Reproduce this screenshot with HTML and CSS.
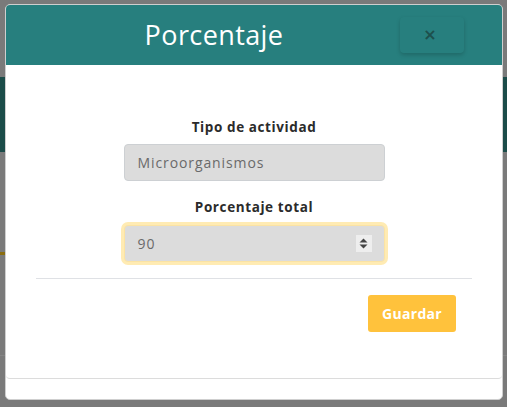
FILE: index.html
```html
<!DOCTYPE html>
<html lang="es">
<head>
<meta charset="utf-8">
<title>Porcentaje</title>
<link rel="stylesheet" href="styles.css">
</head>
<body>
<div class="page">
  <div class="band"></div>
  <div class="accent"></div>
  <div class="rule"></div>
</div>
<div class="modal">
  <div class="card">
    <div class="modal-header">
      <h2 class="title">Porcentaje</h2>
      <button class="close" type="button">&times;</button>
    </div>
    <div class="modal-body">
      <div class="group">
        <label class="label">Tipo de actividad</label>
        <div class="field">Microorganismos</div>
      </div>
      <div class="group">
        <label class="label">Porcentaje total</label>
        <div class="field focus"><span>90</span><span class="spin"><svg width="9" height="11" viewBox="0 0 9 11"><path d="M4.5 0.5 L8.5 4.5 H0.5 Z M4.5 10.5 L8.5 6.5 H0.5 Z" fill="#444"/></svg></span></div>
      </div>
    </div>
    <hr class="sep">
    <div class="modal-footer">
      <button class="save" type="button">Guardar</button>
    </div>
  </div>
</div>
</body>
</html>
```

FILE: styles.css
```css
html, body {
  margin: 0;
  padding: 0;
}
body {
  background: #7a7a7a;
  font-family: "Open Sans", "Liberation Sans", sans-serif;
  width: 507px;
  height: 407px;
  overflow: hidden;
}
.page {
  padding-top: 77px;
}
.band {
  height: 75px;
  background: #1b4c49;
}
.accent {
  margin-top: 100px;
  height: 3px;
  width: 20px;
  background: #8a6d10;
}
.rule {
  margin-top: 100px;
  height: 1px;
  background: #858585;
}
.modal {
  position: absolute;
  left: 5px;
  top: 4px;
  width: 498px;
  height: 396px;
  box-sizing: border-box;
  background: #fff;
  border: 1px solid #cfcfcf;
  border-radius: 5px;
}
.card {
  border-bottom: 1px solid #dcdcdc;
  border-radius: 0 0 4px 4px;
  height: 373px;
  display: flex;
  flex-direction: column;
}
.modal-header {
  height: 60px;
  background: #277f7e;
  display: flex;
  align-items: center;
  padding: 0 38px 0 22px;
  border-radius: 4px 4px 0 0;
}
.title {
  flex: 1;
  margin: 0;
  text-align: center;
  color: #fff;
  font-weight: 400;
  font-size: 27px;
  letter-spacing: 0.4px;
  line-height: 30px;
}
.close {
  width: 64px;
  height: 36px;
  border: none;
  background: #277f7e;
  border-radius: 4px;
  box-shadow: 0 2px 4px rgba(0, 0, 0, 0.18);
  color: #1d4f4c;
  font-size: 16px;
  font-weight: 700;
  line-height: 1;
  padding: 0 4px 0 0;
  font-family: "DejaVu Sans", sans-serif;
}
.modal-body {
  padding: 52px 0 0;
  display: flex;
  flex-direction: column;
  align-items: center;
}
.group {
  width: 261px;
  display: flex;
  flex-direction: column;
  align-items: center;
}
.group + .group {
  margin-top: 16px;
}
.label {
  font-size: 13.5px;
  font-weight: 700;
  color: #2b2b2b;
  line-height: 20px;
  margin-bottom: 7px;
  letter-spacing: 0.6px;
}
.group + .group .label {
  margin-bottom: 8px;
}
.field {
  align-self: stretch;
  height: 37px;
  box-sizing: border-box;
  background: #dcdcdc;
  border: 1px solid #cdd0d3;
  border-radius: 4px;
  padding: 0 13px;
  display: flex;
  align-items: center;
  justify-content: space-between;
  font-size: 14px;
  color: #6a6a6a;
  letter-spacing: 0.9px;
}
.focus {
  border-color: #fbe3a4;
  box-shadow: 0 0 0 3px #ffebb3;
  padding-right: 12px;
}
.spin {
  width: 16px;
  height: 17px;
  background: #eeeeee;
  display: flex;
  align-items: center;
  justify-content: center;
}
.sep {
  margin: 16px 30px 0;
  border: none;
  border-top: 1px solid #dfe1e5;
  height: 0;
}
.modal-footer {
  display: flex;
  justify-content: flex-end;
  padding: 16px 46px 0 0;
}
.save {
  width: 88px;
  height: 37px;
  border: none;
  border-radius: 3px;
  background: #ffc23c;
  color: #fff;
  font-family: "Open Sans", "Liberation Sans", sans-serif;
  font-size: 14px;
  font-weight: 700;
  letter-spacing: 0.3px;
}
```
